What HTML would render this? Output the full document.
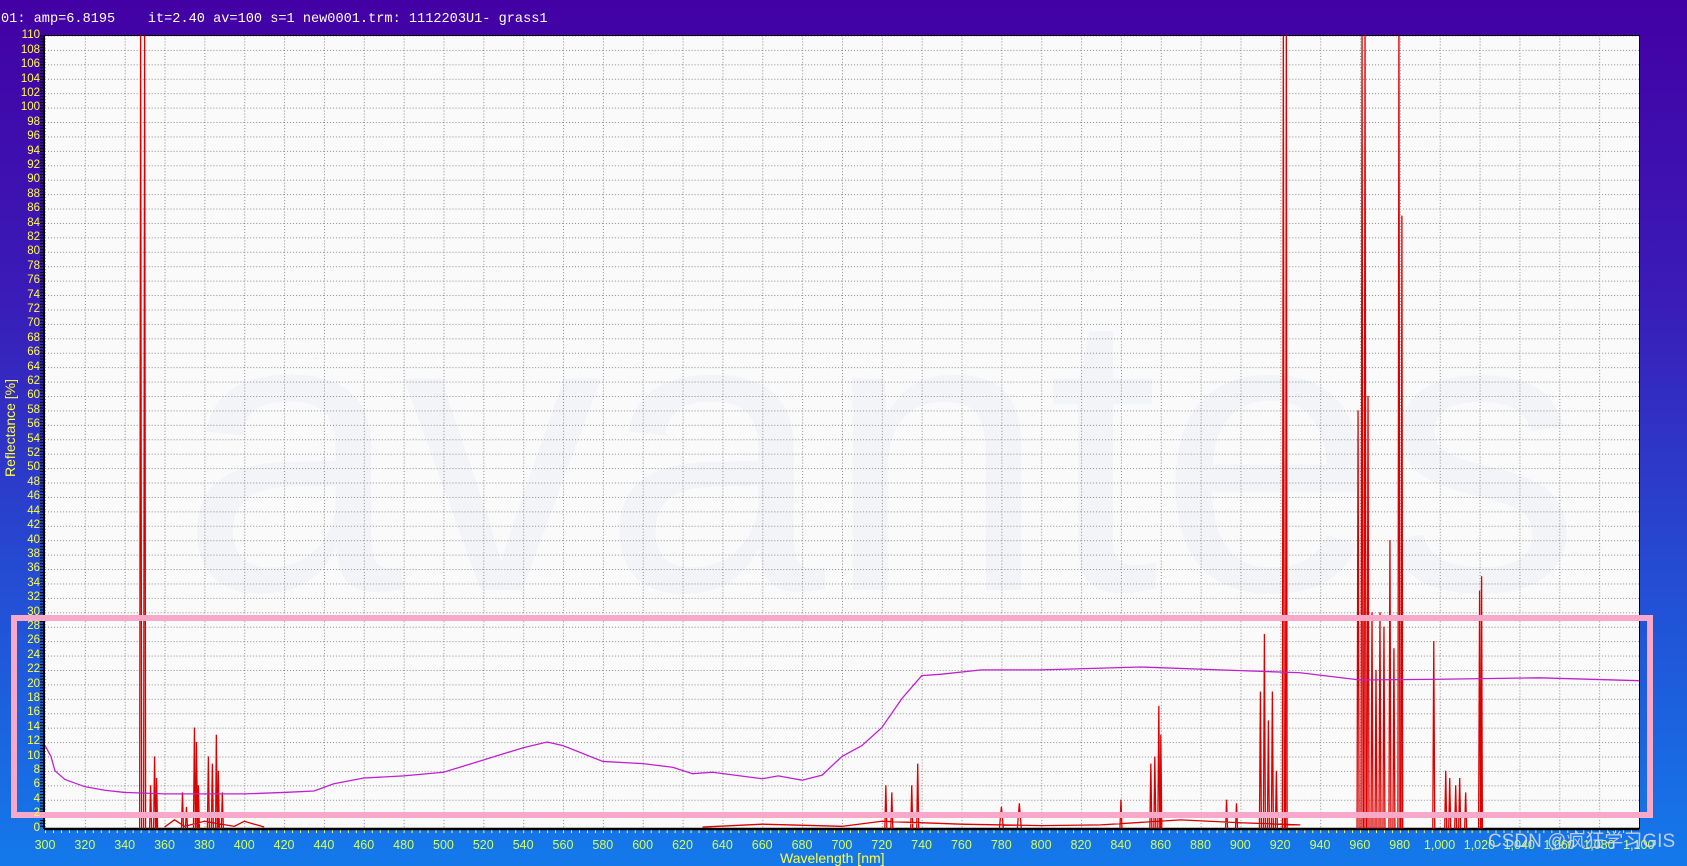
<!DOCTYPE html>
<html style="width:1687px;height:858px;background:#1478ea"><head><meta charset="utf-8"><style>
*{margin:0;padding:0}
body{width:1687px;height:858px;overflow:hidden;position:relative;background:linear-gradient(180deg,#4300a4 0%,#3a1cb8 35%,#2250d6 70%,#1478ea 100%);font-family:"Liberation Sans",sans-serif}
#title{position:absolute;left:1px;top:12px;font-family:"Liberation Mono",monospace;font-size:13.6px;color:#fff;white-space:pre}
#yl{position:absolute;left:0;top:28.3px;width:40px;color:#ffff40;font-size:11.5px;text-align:right}
#yl div{height:14.42px;line-height:14.42px}
#xl{position:absolute;left:25.1px;top:838px;display:flex;color:#d4ff58;font-size:12.5px}
#xl div{width:39.85px;text-align:center}
#ytitle{position:absolute;left:-45px;top:420px;width:110px;text-align:center;transform:rotate(-90deg);color:#ffff40;font-size:14px}
#xtitle{position:absolute;left:780px;top:850px;color:#ffff40;font-size:14px}
#csdn{position:absolute;left:1488px;top:826px;color:rgba(220,220,230,0.85);font-size:19px;font-family:"Liberation Sans","Noto Sans CJK SC",sans-serif}
</style></head><body>
<div id="title">01: amp=6.8195    it=2.40 av=100 s=1 new0001.trm: 1112203U1- grass1</div>
<svg width="1687" height="858" style="position:absolute;left:0;top:0">
<defs>
<pattern id="g" patternUnits="userSpaceOnUse" x="45" y="35.5" width="39.85" height="14.42">
<line x1="0.5" y1="0" x2="0.5" y2="14.42" stroke="#8a8a8a" stroke-width="1" stroke-dasharray="1,2"/>
<line x1="0" y1="0.5" x2="39.85" y2="0.5" stroke="#8a8a8a" stroke-width="1" stroke-dasharray="1,2"/>
</pattern>
<pattern id="tk" patternUnits="userSpaceOnUse" x="45" y="35.5" width="5" height="2.884">
<line x1="0" y1="0.5" x2="5" y2="0.5" stroke="#000" stroke-width="1"/>
</pattern>
<pattern id="xt" patternUnits="userSpaceOnUse" x="45" y="0" width="7.97" height="10">
<line x1="0.5" y1="0" x2="0.5" y2="3" stroke="#ffff40" stroke-width="1"/>
</pattern>
<clipPath id="c"><rect x="45" y="35.5" width="1594" height="793"/></clipPath>
</defs>
<rect x="45" y="35.5" width="1594" height="793" fill="#fafafa"/>
<text x="180" y="590" font-size="400" font-family="Liberation Sans" fill="#eef0f6" opacity="0.5">avantes</text>
<rect x="45" y="35.5" width="1594" height="793" fill="url(#g)"/>
<rect x="40" y="35.5" width="5" height="793" fill="url(#tk)"/>
<rect x="45" y="829" width="1594" height="4" fill="url(#xt)"/>
<line x1="44" y1="35" x2="44" y2="829" stroke="#000" stroke-width="2"/>
<line x1="44" y1="829" x2="1639" y2="829" stroke="#000" stroke-width="2.5"/>
<line x1="1639.5" y1="35" x2="1639.5" y2="829" stroke="#000" stroke-width="1"/>
<line x1="44" y1="35.5" x2="1639" y2="35.5" stroke="#000" stroke-width="1"/>
<g clip-path="url(#c)">
<g transform="translate(-552.75,828.5) scale(1.9925,-7.21)">
<path vector-effect="non-scaling-stroke" fill="none" stroke="#dd0000" stroke-width="1.3" d="M347.5 0L348 112L348.5 0M349.5 0L350 112L350.5 0M352.5 0L353 6L353.5 0M354.5 0L355 10L355.5 0M355.8 0L356 7L356.5 0M368.5 0L369 5L369.5 0M370.5 0L371 3L371.5 0M374.5 0L375 14L375.5 0M375.8 0L376 12L376.6 0M376.8 0L377 6L377.5 0M381.5 0L382 10L382.5 0M383.5 0L384 9L384.5 0M385.6 0L386 13L386.5 0M386.8 0L387 8L387.5 0M388.5 0L389 5L389.5 0M721.5 0L722 6L722.5 0M724.5 0L725 5L725.5 0M734.5 0L735 6L735.5 0M737.5 0L738 9L738.5 0M779 0L780 3L781 0M788 0L789 3.5L790 0M839.5 0L840 4L840.5 0M854.5 0L855 9L855.5 0M856.5 0L857 10L857.5 0M858.5 0L859 17L859.5 0M859.8 0L860 13L860.5 0M892.5 0L893 4L893.5 0M897.5 0L898 3.5L898.5 0M909.5 0L910 19L910.5 0M911.5 0L912 27L912.5 0M913.5 0L914 15L914.5 0M915.5 0L916 19L916.5 0M917.5 0L918 8L918.5 0M921 0L921.5 112L922 0M922.6 0L923 112L923.4 0M958.5 0L959 58L959.5 0M960.5 0L961 112L961.5 0M962 0L962.5 112L963 0M963.5 0L964 60L964.5 0M965.5 0L966 30L966.5 0M967.5 0L968 22L968.5 0M969.5 0L970 30L970.5 0M971.5 0L972 28L972.5 0M974.5 0L975 40L975.5 0M976.5 0L977 25L977.5 0M979 0L979.5 112L980 0M980.6 0L981 85L981.4 0M996.5 0L997 26L997.5 0M1002.5 0L1003 8L1003.5 0M1004.5 0L1005 7L1005.5 0M1007.5 0L1008 6L1008.5 0M1009.5 0L1010 7L1010.5 0M1012.5 0L1013 5L1013.5 0M1019.5 0L1020 33L1020.5 0M1020.7 0L1021 35L1021.4 0M360 0.2L365 1.2L370 0.3L380 1L395 0.3L400 1L410 0.2M630 0.2L660 0.6L700 0.3L720 1L760 0.6L800 0.4L830 0.5L870 1.2L900 0.8L930 0.5"/>
<path vector-effect="non-scaling-stroke" fill="none" stroke="#c020d0" stroke-width="1.3" d="M300 11.5L303 10L305 8L310 6.8L320 5.8L330 5.3L340 5L360 4.8L400 4.8L420 5L435 5.2L445 6.2L460 7L480 7.3L500 7.8L520 9.5L540 11.2L552 12L560 11.5L580 9.3L600 9L615 8.5L625 7.6L635 7.8L660 6.9L668 7.3L680 6.7L690 7.4L700 10L710 11.5L720 14L730 18L740 21.2L750 21.4L770 22L800 22L850 22.4L900 21.9L930 21.6L960 20.6L1000 20.7L1050 20.9L1100 20.5"/>
</g>
</g>
<rect x="14" y="618" width="1636" height="197" fill="none" stroke="#f8a8c8" stroke-width="6"/>
</svg>
<div id="yl"><div>110</div><div>108</div><div>106</div><div>104</div><div>102</div><div>100</div><div>98</div><div>96</div><div>94</div><div>92</div><div>90</div><div>88</div><div>86</div><div>84</div><div>82</div><div>80</div><div>78</div><div>76</div><div>74</div><div>72</div><div>70</div><div>68</div><div>66</div><div>64</div><div>62</div><div>60</div><div>58</div><div>56</div><div>54</div><div>52</div><div>50</div><div>48</div><div>46</div><div>44</div><div>42</div><div>40</div><div>38</div><div>36</div><div>34</div><div>32</div><div>30</div><div>28</div><div>26</div><div>24</div><div>22</div><div>20</div><div>18</div><div>16</div><div>14</div><div>12</div><div>10</div><div>8</div><div>6</div><div>4</div><div>2</div><div>0</div></div>
<div id="xl"><div>300</div><div>320</div><div>340</div><div>360</div><div>380</div><div>400</div><div>420</div><div>440</div><div>460</div><div>480</div><div>500</div><div>520</div><div>540</div><div>560</div><div>580</div><div>600</div><div>620</div><div>640</div><div>660</div><div>680</div><div>700</div><div>720</div><div>740</div><div>760</div><div>780</div><div>800</div><div>820</div><div>840</div><div>860</div><div>880</div><div>900</div><div>920</div><div>940</div><div>960</div><div>980</div><div>1,000</div><div>1,020</div><div>1,040</div><div>1,060</div><div>1,080</div><div>1,100</div></div>
<div id="ytitle">Reflectance [%]</div>
<div id="xtitle">Wavelength [nm]</div>
<div id="csdn">CSDN @疯狂学习GIS</div>
</body></html>
